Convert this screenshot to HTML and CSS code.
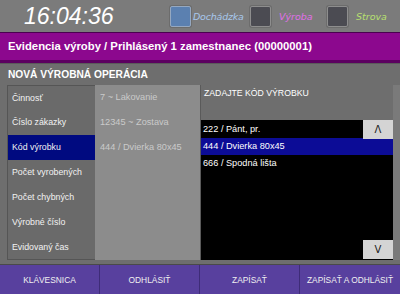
FILE: index.html
```html
<!DOCTYPE html>
<html lang="sk">
<head>
<meta charset="utf-8">
<link rel="stylesheet" href="styles.css">
</head>
<body>
<div class="screen">
  <header class="topbar">
    <div class="clock">16:04:36</div>
    <div class="indicators">
      <span class="sq sq-blue"></span><span class="ind ind-blue">Dochádzka</span>
      <span class="sq"></span><span class="ind ind-pink">Výroba</span>
      <span class="sq"></span><span class="ind ind-green">Strova</span>
    </div>
  </header>
  <div class="titlebar">Evidencia výroby / Prihlásený 1 zamestnanec (00000001)</div>
  <div class="section-title">NOVÁ VÝROBNÁ OPERÁCIA</div>
  <div class="main">
    <div class="form">
      <div class="row"><div class="lbl">Činnosť</div><div class="val">7 ~ Lakovanie</div></div>
      <div class="row"><div class="lbl">Číslo zákazky</div><div class="val">12345 ~ Zostava</div></div>
      <div class="row"><div class="lbl sel">Kód výrobku</div><div class="val">444 / Dvierka 80x45</div></div>
      <div class="row"><div class="lbl">Počet vyrobených</div><div class="val"></div></div>
      <div class="row"><div class="lbl">Počet chybných</div><div class="val"></div></div>
      <div class="row"><div class="lbl">Výrobné číslo</div><div class="val"></div></div>
      <div class="row"><div class="lbl">Evidovaný čas</div><div class="val"></div></div>
    </div>
    <div class="picker">
      <div class="picker-label">ZADAJTE KÓD VÝROBKU</div>
      <div class="list">
        <div class="item">222 / Pánt, pr.</div>
        <div class="item item-sel">444 / Dvierka 80x45</div>
        <div class="item">666 / Spodná lišta</div>
        <button class="scroll scroll-up">Λ</button>
        <button class="scroll scroll-down">V</button>
      </div>
    </div>
    <div class="stripe"></div>
  </div>
  <footer class="buttons">
    <div class="btn">KLÁVESNICA</div>
    <div class="btn">ODHLÁSIŤ</div>
    <div class="btn">ZAPÍSAŤ</div>
    <div class="btn">ZAPÍSAŤ A ODHLÁSIŤ</div>
  </footer>
</div>
</body>
</html>
```

FILE: styles.css
```css
html, body {
  margin: 0;
  padding: 0;
  background: #6e6e6e;
}
.screen {
  width: 400px;
  height: 294px;
  display: flex;
  flex-direction: column;
  font-family: "Liberation Sans", Arial, sans-serif;
  color: #fff;
  overflow: hidden;
}
.topbar {
  height: 32px;
  background: #7b7b7b;
  display: flex;
  align-items: center;
}
.clock {
  font-family: "Liberation Sans", Arial, sans-serif;
  font-style: italic;
  font-size: 23px;
  color: #fff;
  margin-left: 24px;
  width: 146px;
}
.indicators {
  display: flex;
  align-items: center;
}
.sq {
  width: 19px;
  height: 19px;
  background: #4b4b52;
  border: 1px solid #8e8e8e;
  border-radius: 2px;
  margin-right: 8px;
  box-shadow: 0 0 0 1px #6c6c6c;
}
.sq-blue {
  background: #5b80b0;
  border-color: #95a8c0;
  margin-right: 2px;
}
.ind {
  font-family: "DejaVu Sans", sans-serif;
  font-style: italic;
  font-size: 9.5px;
}
.ind-blue { color: #a8c8ec; width: 57px; letter-spacing: -0.2px; }
.ind-pink { color: #e070e8; width: 48px; }
.ind-green { color: #b8e070; }
.titlebar {
  height: 27px;
  border-top: 1px solid #4a0050;
  border-bottom: 3px solid #5c0060;
  background: #8c088e;
  font-size: 11.3px;
  font-weight: bold;
  line-height: 27px;
  padding-left: 8px;
  white-space: nowrap;
}
.section-title {
  height: 22px;
  line-height: 21px;
  font-size: 10.2px;
  font-weight: bold;
  padding-left: 8px;
  border-top: 1px solid #5a5a5a;
  box-sizing: border-box;
}
.main {
  height: 175px;
  display: flex;
  padding-left: 7px;
}
.form {
  width: 193px;
  display: flex;
  flex-direction: column;
  background: #8c8c8c;
  box-sizing: border-box;
}
.row {
  display: flex;
  height: 25px;
}
.lbl {
  width: 88px;
  background: #6a6a6a;
  border-left: 1px solid #555;
  box-sizing: border-box;
  font-size: 8.8px;
  line-height: 25px;
  padding-left: 4px;
  white-space: nowrap;
  color: #f2f2f2;
}
.row:first-child .lbl { border-top: 1px solid #555; }
.row:last-child .lbl { border-bottom: 1px solid #555; }
.lbl.sel {
  background: #000a80;
}
.val {
  flex: 1;
  font-size: 9.2px;
  line-height: 25px;
  padding-left: 5px;
  color: #cacaca;
  white-space: nowrap;
}
.picker {
  width: 193px;
  display: flex;
  flex-direction: column;
  border-left: 1px solid #5a5a5a;
  box-sizing: border-box;
}
.picker-label {
  height: 35px;
  font-size: 8.7px;
  padding-left: 3px;
  padding-top: 2px;
  line-height: 12px;
  box-sizing: border-box;
}
.list {
  flex: 1;
  background: #000;
  position: relative;
  padding-top: 1px;
}
.item {
  height: 17px;
  line-height: 17px;
  font-size: 9.2px;
  padding-left: 2px;
  white-space: nowrap;
}
.item-sel {
  background: #0c0c96;
}
.scroll {
  position: absolute;
  right: 0;
  width: 30px;
  height: 19px;
  border: none;
  padding: 0;
  background: #d4d4d4;
  color: #222;
  font-family: "DejaVu Sans", sans-serif;
  font-size: 10px;
}
.scroll-up { top: 0; }
.scroll-down { bottom: 1px; }
.stripe {
  width: 7px;
  background: #7a7a7a;
}
.buttons {
  margin-top: 4px;
  height: 30px;
  display: flex;
  border-top: 1px solid #4a4a4a;
  box-sizing: border-box;
}
.btn {
  width: 100px;
  background: #58409e;
  border-right: 1px solid #3e2c78;
  box-sizing: border-box;
  display: flex;
  align-items: center;
  justify-content: center;
  font-size: 8.4px;
  color: #f0f0f0;
  white-space: nowrap;
}
.btn:last-child { border-right: none; }
```
